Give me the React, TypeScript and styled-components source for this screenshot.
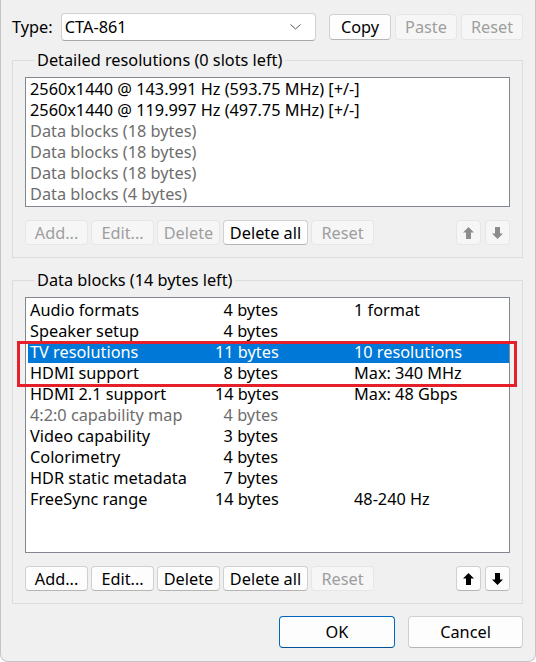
import React from "react";
import styled, { createGlobalStyle, css } from "styled-components";

const Global = createGlobalStyle`
  html, body { margin: 0; padding: 0; background: #ffffff; }
  body { font-family: "Noto Sans", "Open Sans", sans-serif; font-size: 16.3px; color: #000; }
  * { box-sizing: border-box; }
`;

const Window = styled.div`
  width: 536px;
  height: 662px;
  background: #f0f0f0;
  border: 1px solid #c4c4c4;
  border-top: none;
  border-radius: 0 0 8px 8px;
  padding: 13px 12px 0 11px;
  display: flex;
  flex-direction: column;
`;

const TopRow = styled.div`
  display: flex;
  align-items: center;
  height: 28px;
`;

const Label = styled.span`
  width: 49px;
  line-height: 20px;
`;

const Combo = styled.div`
  width: 256px;
  height: 28px;
  background: #ffffff;
  border: 1px solid #d0d0d0;
  border-bottom-color: #a8a8a8;
  border-radius: 4px;
  display: flex;
  align-items: center;
  justify-content: space-between;
  padding: 0 14px 0 3px;
  margin-right: 13px;
`;

const ButtonGroup = styled.div`
  display: flex;
  gap: 4px;
`;

const Button = styled.button<{ $w?: number; $h?: number; $disabled?: boolean; $default?: boolean }>`
  width: ${(p) => p.$w ?? 63}px;
  height: ${(p) => p.$h ?? 25}px;
  padding: 0;
  font-family: inherit;
  font-size: 16.3px;
  line-height: 20px;
  border-radius: 4px;
  display: flex;
  align-items: center;
  justify-content: center;
  background: #fdfdfd;
  color: #000;
  border: 1px solid #d0d0d0;
  border-bottom-color: #b5b5b5;
  ${(p) =>
    p.$disabled &&
    css`
      background: #f6f6f6;
      color: #9e9e9e;
      border-color: #e6e6e6;
    `}
  ${(p) =>
    p.$default &&
    css`
      border: 1px solid #0067c0;
      border-bottom-color: #00509a;
      background: #fdfdfd;
    `}
`;

const Group = styled.fieldset<{ $top: number }>`
  margin: ${(p) => p.$top}px 0 0 0;
  border: 1px solid #dcdcdc;
  padding: 0 12px 12px 12px;
  min-width: 0;
`;

const Legend = styled.legend`
  padding: 0 3px;
  margin-left: 9px;
  line-height: 20px;
`;

const ListWrap = styled.div`
  position: relative;
  margin-top: 7px;
`;

const List = styled.div<{ $h: number; $pad: number }>`
  height: ${(p) => p.$h}px;
  background: #ffffff;
  border: 1px solid #828790;
  padding: ${(p) => p.$pad}px 0 0 1px;
  overflow: hidden;
`;

const Row = styled.div<{ $muted?: boolean; $selected?: boolean }>`
  height: 21px;
  line-height: 21px;
  padding-left: 2px;
  margin-left: 1px;
  width: 482px;
  white-space: nowrap;
  color: ${(p) => (p.$muted ? "#6d6d6d" : "#000")};
  ${(p) =>
    p.$selected &&
    css`
      background: #0078d7;
      color: #ffffff;
    `}
`;

const GridRow = styled(Row)`
  display: grid;
  grid-template-columns: 185px 63px 1fr;
`;

const BytesCell = styled.span`
  text-align: right;
`;

const ValueCell = styled.span`
  padding-left: 76px;
`;

const Highlight = styled.div`
  position: absolute;
  left: -8px;
  top: 44px;
  width: 500px;
  height: 46px;
  border: 3px solid #e5202b;
  pointer-events: none;
`;

const ActionRow = styled.div`
  display: flex;
  align-items: center;
  margin-top: 13px;
  gap: 3px;
`;

const ArrowGroup = styled.div`
  margin-left: auto;
  display: flex;
  gap: 4px;
`;

const Footer = styled.div`
  display: flex;
  justify-content: flex-end;
  gap: 13px;
  margin-top: 12px;
`;

const Arrow = ({ down, color }: { down?: boolean; color: string }) => (
  <svg width="11" height="12" viewBox="0 0 11 12" style={down ? { transform: "rotate(180deg)" } : undefined}>
    <polygon points="5.5,0 11,5.5 8,5.5 8,12 3,12 3,5.5 0,5.5" fill={color} />
  </svg>
);

const Chevron = () => (
  <svg width="11" height="6" viewBox="0 0 11 6">
    <polyline points="0.5,0.5 5.5,5 10.5,0.5" fill="none" stroke="#555" strokeWidth="1" />
  </svg>
);

const detailed = [
  { t: "2560x1440 @ 143.991 Hz (593.75 MHz) [+/-]", m: false },
  { t: "2560x1440 @ 119.997 Hz (497.75 MHz) [+/-]", m: false },
  { t: "Data blocks (18 bytes)", m: true },
  { t: "Data blocks (18 bytes)", m: true },
  { t: "Data blocks (18 bytes)", m: true },
  { t: "Data blocks (4 bytes)", m: true },
];

const blocks = [
  { n: "Audio formats", b: "4 bytes", v: "1 format" },
  { n: "Speaker setup", b: "4 bytes", v: "" },
  { n: "TV resolutions", b: "11 bytes", v: "10 resolutions", s: true },
  { n: "HDMI support", b: "8 bytes", v: "Max: 340 MHz" },
  { n: "HDMI 2.1 support", b: "14 bytes", v: "Max: 48 Gbps" },
  { n: "4:2:0 capability map", b: "4 bytes", v: "", m: true },
  { n: "Video capability", b: "3 bytes", v: "" },
  { n: "Colorimetry", b: "4 bytes", v: "" },
  { n: "HDR static metadata", b: "7 bytes", v: "" },
  { n: "FreeSync range", b: "14 bytes", v: "48-240 Hz" },
];

export default function App() {
  return (
    <>
      <Global />
      <Window>
        <TopRow>
          <Label>Type:</Label>
          <Combo>
            <span>CTA-861</span>
            <Chevron />
          </Combo>
          <ButtonGroup>
            <Button $w={62} $h={26}>Copy</Button>
            <Button $w={62} $h={26} $disabled>Paste</Button>
            <Button $w={62} $h={26} $disabled>Reset</Button>
          </ButtonGroup>
        </TopRow>

        <Group $top={9}>
          <Legend>Detailed resolutions (0 slots left)</Legend>
          <ListWrap>
            <List $h={130} $pad={1}>
              {detailed.map((d, i) => (
                <Row key={i} $muted={d.m}>{d.t}</Row>
              ))}
            </List>
          </ListWrap>
          <ActionRow>
            <Button $disabled>Add...</Button>
            <Button $disabled>Edit...</Button>
            <Button $disabled>Delete</Button>
            <Button $w={85}>Delete all</Button>
            <Button $disabled>Reset</Button>
            <ArrowGroup>
              <Button $w={25} $disabled><Arrow color="#8c8c8c" /></Button>
              <Button $w={25} $disabled><Arrow down color="#8c8c8c" /></Button>
            </ArrowGroup>
          </ActionRow>
        </Group>

        <Group $top={12}>
          <Legend>Data blocks (14 bytes left)</Legend>
          <ListWrap>
            <List $h={256} $pad={2}>
              {blocks.map((b, i) => (
                <GridRow key={i} $muted={b.m} $selected={b.s}>
                  <span>{b.n}</span>
                  <BytesCell>{b.b}</BytesCell>
                  <ValueCell>{b.v}</ValueCell>
                </GridRow>
              ))}
            </List>
            <Highlight />
          </ListWrap>
          <ActionRow>
            <Button>Add...</Button>
            <Button>Edit...</Button>
            <Button>Delete</Button>
            <Button $w={85}>Delete all</Button>
            <Button $disabled>Reset</Button>
            <ArrowGroup>
              <Button $w={25}><Arrow color="#000" /></Button>
              <Button $w={25}><Arrow down color="#000" /></Button>
            </ArrowGroup>
          </ActionRow>
        </Group>

        <Footer>
          <Button $w={116} $h={32} $default>OK</Button>
          <Button $w={115} $h={32}>Cancel</Button>
        </Footer>
      </Window>
    </>
  );
}
